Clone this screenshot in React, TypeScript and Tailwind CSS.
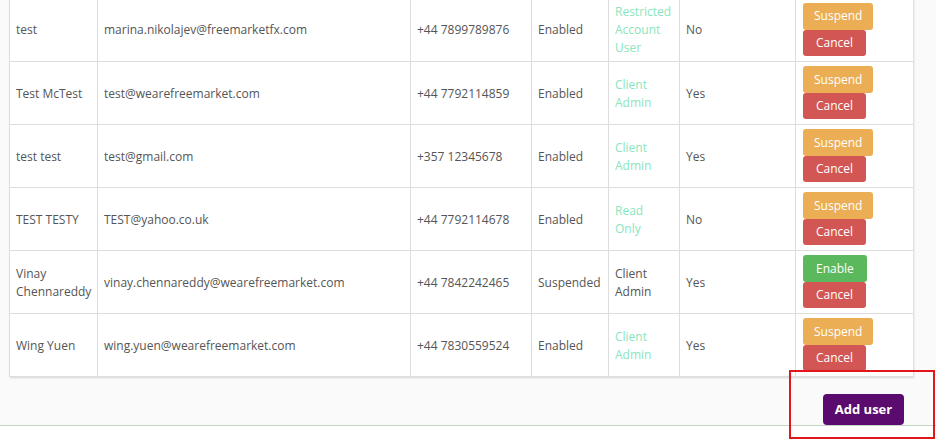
import type { FC } from 'react';

type Row = {
    name: string;
    email: string;
    phone: string;
    status: string;
    role: string;
    roleActive: boolean;
    admin: string;
    suspended: boolean;
};

const rows: Row[] = [
    { name: 'test', email: 'marina.nikolajev@freemarketfx.com', phone: '+44 7899789876', status: 'Enabled', role: 'Restricted Account User', roleActive: true, admin: 'No', suspended: false },
    { name: 'Test McTest', email: 'test@wearefreemarket.com', phone: '+44 7792114859', status: 'Enabled', role: 'Client Admin', roleActive: true, admin: 'Yes', suspended: false },
    { name: 'test test', email: 'test@gmail.com', phone: '+357 12345678', status: 'Enabled', role: 'Client Admin', roleActive: true, admin: 'Yes', suspended: false },
    { name: 'TEST TESTY', email: 'TEST@yahoo.co.uk', phone: '+44 7792114678', status: 'Enabled', role: 'Read Only', roleActive: true, admin: 'No', suspended: false },
    { name: 'Vinay Chennareddy', email: 'vinay.chennareddy@wearefreemarket.com', phone: '+44 7842242465', status: 'Suspended', role: 'Client Admin', roleActive: false, admin: 'Yes', suspended: true },
    { name: 'Wing Yuen', email: 'wing.yuen@wearefreemarket.com', phone: '+44 7830559524', status: 'Enabled', role: 'Client Admin', roleActive: true, admin: 'Yes', suspended: false },
];

const cell = 'border-r border-[#dddddd] pl-[6px] pr-2 pt-[2px] align-middle';

const App: FC = () => {
    return (
        <div
            className="relative h-[439px] w-[936px] overflow-hidden bg-white text-[12px] leading-[18px] text-[#555555]"
            style={{ fontFamily: '"Open Sans", "Liberation Sans", sans-serif' }}
        >
            <div className="h-[428px] border-b border-[#c7d5c7] bg-[#fafafa] pl-[9px] pr-[24px]">
                <table className="-mt-[2px] w-[903px] table-fixed border-collapse border-l border-[#dddddd] bg-white shadow-[1px_1px_2px_rgba(0,0,0,0.15)]">
                    <colgroup>
                        <col className="w-[88px]" />
                        <col className="w-[313px]" />
                        <col className="w-[121px]" />
                        <col className="w-[77px]" />
                        <col className="w-[71px]" />
                        <col className="w-[116px]" />
                        <col className="w-[117px]" />
                    </colgroup>
                    <tbody>
                        {rows.map((r) => (
                            <tr key={r.email} className="h-[63px] border-b border-[#dddddd]">
                                <td className={cell}>{r.name}</td>
                                <td className={cell}>{r.email}</td>
                                <td className={cell}>{r.phone}</td>
                                <td className={cell}>{r.status}</td>
                                <td className={`${cell} ${r.roleActive ? 'text-[#8ae6bd]' : ''}`}>{r.role}</td>
                                <td className={cell}>{r.admin}</td>
                                <td className="pl-[7px] align-middle">
                                    <div className="flex flex-col items-start">
                                        {r.suspended ? (
                                            <button className="h-[27px] rounded-[3px] bg-[#5cb85c] px-[13px] text-[12px] text-white">Enable</button>
                                        ) : (
                                            <button className="h-[27px] rounded-[3px] bg-[#ebae54] px-[11px] text-[12px] text-white">Suspend</button>
                                        )}
                                        <button className="h-[26px] rounded-[3px] bg-[#d25654] px-[13px] text-[12px] text-white">Cancel</button>
                                    </div>
                                </td>
                            </tr>
                        ))}
                    </tbody>
                </table>
                <div className="mt-[17px] flex justify-end pr-[8px]">
                    <button className="h-[31px] w-[81px] rounded-[4px] bg-[#5a0b6d] text-[13px] font-bold text-white">Add user</button>
                </div>
            </div>
            <div className="pointer-events-none absolute left-[789px] top-[370px] h-[69px] w-[146px] border-2 border-[#e3161b]" />
        </div>
    );
};

export default App;
